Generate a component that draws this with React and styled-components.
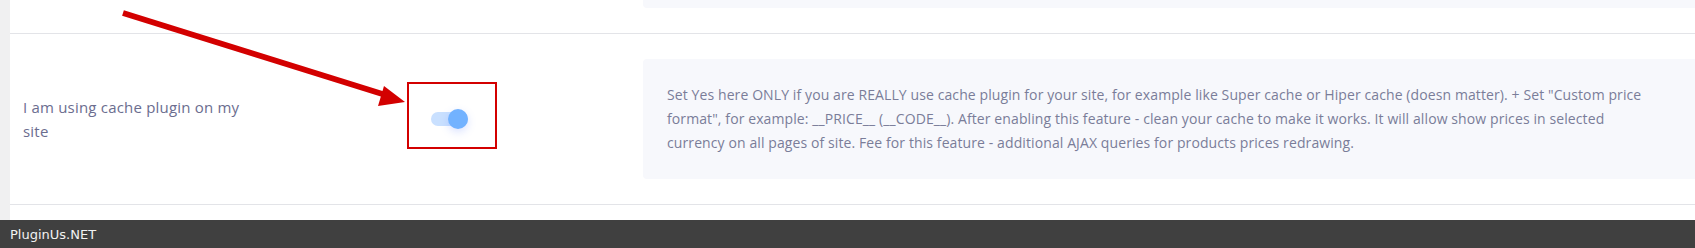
import React, { useState } from "react";
import styled, { createGlobalStyle } from "styled-components";

const GlobalStyle = createGlobalStyle`
  html, body {
    margin: 0;
    padding: 0;
    background: #fff;
  }
  body {
    font-family: "Open Sans", Lato, sans-serif;
    overflow: hidden;
  }
`;

const Page = styled.div`
  position: relative;
  display: flex;
  width: 1695px;
  height: 248px;
  flex-direction: column;
`;

const Main = styled.div`
  display: flex;
  flex: 1;
`;

const Strip = styled.div`
  width: 10px;
  background: #f0f0f1;
`;

const Content = styled.div`
  flex: 1;
  background: #fff;
  overflow: hidden;
`;

const Row = styled.div`
  display: grid;
  grid-template-columns: 383px 237px 1fr;
  align-items: center;
  padding: ${({ $top }) => ($top ? "0 0 25px" : "25px 0")};
  padding-left: 13px;
  border-bottom: 1px solid #e3e4e8;
`;

const Label = styled.div`
  max-width: 232px;
  font-size: 15px;
  line-height: 24px;
  letter-spacing: 0.2px;
  color: #6b6d8f;
`;

const ControlCell = styled.div`
  display: flex;
  align-items: center;
  padding-left: 25px;
`;

const ToggleWrap = styled.div`
  position: relative;
  display: flex;
`;

const Desc = styled.div`
  background: #f7f8fc;
  border-radius: ${({ $stub }) => ($stub ? "0 0 0 4px" : "4px 0 0 4px")};
  height: ${({ $stub }) => ($stub ? "8px" : "auto")};
  padding: ${({ $stub }) => ($stub ? "0" : "24px 33px 24px 24px")};
  font-size: 14px;
  line-height: 24px;
  letter-spacing: 0.1px;
  color: #7a7d99;
`;

const Track = styled.button`
  position: relative;
  width: 37px;
  height: 14px;
  padding: 0;
  border: none;
  border-radius: 7px;
  background: ${({ $on }) => ($on ? "#c9e0ff" : "#e2e4ea")};
  cursor: pointer;
`;

const Thumb = styled.span`
  position: absolute;
  top: -3px;
  left: ${({ $on }) => ($on ? "17px" : "0")};
  width: 20px;
  height: 20px;
  border-radius: 50%;
  background: ${({ $on }) => ($on ? "#72b2ff" : "#fff")};
  box-shadow: 0 3px 8px rgba(80, 120, 255, 0.22);
`;

const Highlight = styled.div`
  position: absolute;
  left: -24px;
  top: -30px;
  width: 86px;
  height: 63px;
  border: 2px solid #d30000;
  pointer-events: none;
`;

const Arrow = styled.svg`
  position: absolute;
  left: 0;
  top: 0;
  pointer-events: none;
`;

const Gap = styled.div`
  height: 15px;
`;

const Footer = styled.div`
  display: flex;
  align-items: center;
  height: 28px;
  padding-left: 10px;
  background: #404040;
  color: #f2f2f2;
  font-family: "DejaVu Sans", sans-serif;
  font-size: 13px;
`;

export default function App() {
  const [on, setOn] = useState(true);

  return (
    <>
      <GlobalStyle />
      <Page>
        <Main>
          <Strip />
          <Content>
            <Row $top>
              <div />
              <div />
              <Desc $stub />
            </Row>
            <Row>
              <Label>I am using cache plugin on my site</Label>
              <ControlCell>
                <ToggleWrap>
                  <Track $on={on} onClick={() => setOn((v) => !v)}>
                    <Thumb $on={on} />
                  </Track>
                  <Highlight />
                </ToggleWrap>
              </ControlCell>
              <Desc>
                Set Yes here ONLY if you are REALLY use cache plugin for your site, for example like Super cache or Hiper cache (doesn matter). + Set "Custom price format", for example: __PRICE__ (__CODE__). After enabling this feature - clean your cache to make it works. It will allow show prices in selected currency on all pages of site. Fee for this feature - additional AJAX queries for products prices redrawing.
              </Desc>
            </Row>
            <Gap />
          </Content>
        </Main>
        <Footer>PluginUs.NET</Footer>
        <Arrow width="420" height="120" viewBox="0 0 420 120">
          <line x1="123" y1="13" x2="392" y2="97" stroke="#d30000" strokeWidth="6" />
          <polygon points="405,102 384,86 378,106" fill="#d30000" />
        </Arrow>
      </Page>
    </>
  );
}
